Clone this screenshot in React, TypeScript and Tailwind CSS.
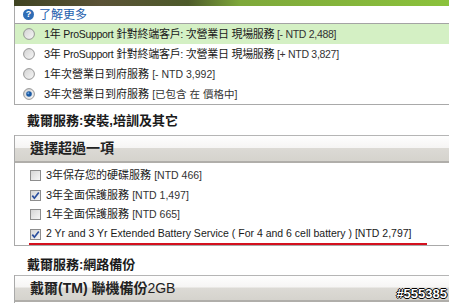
const font = "font-['Liberation_Sans','Noto_Sans_CJK_TC',sans-serif]";

const Radio = ({ checked }: { checked?: boolean }) => (
    <svg width="12" height="12" viewBox="0 0 12 12" className="shrink-0">
        <defs>
            <linearGradient id={checked ? "rg-on" : "rg-off"} x1="0" y1="0" x2="1" y2="1">
                <stop offset="0" stopColor="#d2d2d2" />
                <stop offset="1" stopColor="#f7f7f7" />
            </linearGradient>
        </defs>
        <circle cx="6" cy="6" r="5.4" fill={`url(#${checked ? "rg-on" : "rg-off"})`} stroke="#8c8c8c" strokeWidth="0.9" />
        {checked && <circle cx="6" cy="6" r="2.8" fill="#1b5aa3" />}
        {checked && <circle cx="5.3" cy="5.3" r="1" fill="#6fa6e0" />}
    </svg>
);

const Checkbox = ({ checked }: { checked?: boolean }) => (
    <svg width="11" height="11" viewBox="0 0 11 11" className="shrink-0">
        <defs>
            <linearGradient id="cb" x1="0" y1="0" x2="1" y2="1">
                <stop offset="0" stopColor="#d4d4d4" />
                <stop offset="1" stopColor="#f8f8f8" />
            </linearGradient>
        </defs>
        <rect x="0.5" y="0.5" width="10" height="10" fill="url(#cb)" stroke="#8d8d8d" />
        {checked && <path d="M2.3 5.6 L4.4 8.2 L8.8 2.4" fill="none" stroke="#2b4f9e" strokeWidth="1.7" />}
    </svg>
);

const Price = ({ children }: { children: React.ReactNode }) => (
    <span className="text-[10.5px] text-[#333]">{children}</span>
);

const Pro = () => <span className="text-[10.5px]">ProSupport</span>;

const radios = [
    { label: <>1年 <Pro /> 針對終端客戶: 次營業日 現場服務</>, price: "[- NTD 2,488]", hl: true, tight: true },
    { label: <>3年 <Pro /> 針對終端客戶: 次營業日 現場服務</>, price: "[+ NTD 3,827]", tight: true },
    { label: "1年次營業日到府服務", price: "[- NTD 3,992]" },
    { label: "3年次營業日到府服務", price: "[已包含 在 價格中]", checked: true },
];

const checks = [
    { label: "3年保存您的硬碟服務", price: "[NTD 466]" },
    { label: "3年全面保護服務", price: "[NTD 1,497]", checked: true },
    { label: "1年全面保護服務", price: "[NTD 665]" },
];

const headerBg = "bg-[linear-gradient(to_bottom,#fefefe_0%,#f6f5f4_46%,#dcdad5_50%,#d5d3cd_100%)]";

export default function App() {
    return (
        <div className={`relative w-[449px] h-[303px] overflow-hidden bg-white text-[#1a1a1a] ${font}`}>
            <div className="pl-[14px]">
                <div className="h-[6px] bg-[linear-gradient(to_right,#3f4422_0%,#5a5236_20%,#4d5a2a_40%,#7ea83a_52%,#8bc23c_100%)]" />

                <div className="border-l border-b border-[#a9a9a9]">
                    <div className="flex items-center h-[18px] border-b border-[#a4a4a4]">
                        <span className="ml-[8px] w-[11px] h-[11px] rounded-full bg-[#2f6db5] text-white text-[9px] font-bold leading-[11px] text-center">?</span>
                        <span className="ml-[5px] text-[12px] text-[#1f5fae]">了解更多</span>
                    </div>
                    {radios.map((r, i) => (
                        <div key={i} className={`flex items-center h-[20px] text-[11px] ${r.hl ? "bg-[#d4f0c4]" : ""}`}>
                            <span className="ml-[8px] mr-[9px] flex"><Radio checked={r.checked} /></span>
                            <span className={`whitespace-nowrap ${r.tight ? "tracking-[-0.3px]" : ""}`}>{r.label} <Price>{r.price}</Price></span>
                        </div>
                    ))}
                </div>

                <div className="h-[30px] flex items-center pl-[13px] pt-[2px] text-[13px] font-bold">戴爾服務:安裝,培訓及其它</div>

                <div className="relative border-l border-b border-[#a9a9a9]">
                    <div className={`h-[28px] flex items-center pl-[15px] border-t border-b-2 border-t-[#b5b5b5] border-b-[#b0aeaa] text-[14px] font-bold text-[#222] ${headerBg}`}>
                        選擇超過一項
                    </div>
                    <div className="pt-[3px] pb-[1px]">
                        {checks.map((c, i) => (
                            <div key={i} className="flex items-center h-[19.5px] text-[11px]">
                                <span className="ml-[15px] mr-[5px] flex"><Checkbox checked={c.checked} /></span>
                                <span className="whitespace-nowrap">{c.label} <Price>{c.price}</Price></span>
                            </div>
                        ))}
                        <div className="flex items-center h-[19.5px] text-[10.5px]">
                            <span className="ml-[15px] mr-[5px] flex"><Checkbox checked /></span>
                            <span className="whitespace-nowrap">2 Yr and 3 Yr Extended Battery Service ( For 4 and 6 cell battery ) [NTD 2,797]</span>
                        </div>
                    </div>
                    <div className="absolute left-[14px] bottom-[0px] w-[398px] h-[2px] bg-[#d4101e]" />
                </div>

                <div className="h-[29px] flex items-center pl-[13px] pt-[8px] text-[13px] font-bold">戴爾服務:網路備份</div>

                <div className="border-l border-[#a9a9a9] h-[40px]">
                    <div className={`h-[27px] flex items-center pl-[15px] border-t border-b-2 border-t-[#b5b5b5] border-b-[#b0aeaa] text-[14px] text-[#222] ${headerBg}`}>
                        <span className="font-bold">戴爾(TM) 聯機備份</span>
                        <span>2GB</span>
                    </div>
                </div>
            </div>

            <div className="absolute right-[2px] bottom-[3px] text-[13px] leading-[13px] font-bold text-white font-['Liberation_Sans',sans-serif] [text-shadow:1px_0_0_#000,-1px_0_0_#000,0_1px_0_#000,0_-1px_0_#000]">
                #555385
            </div>
        </div>
    );
}
